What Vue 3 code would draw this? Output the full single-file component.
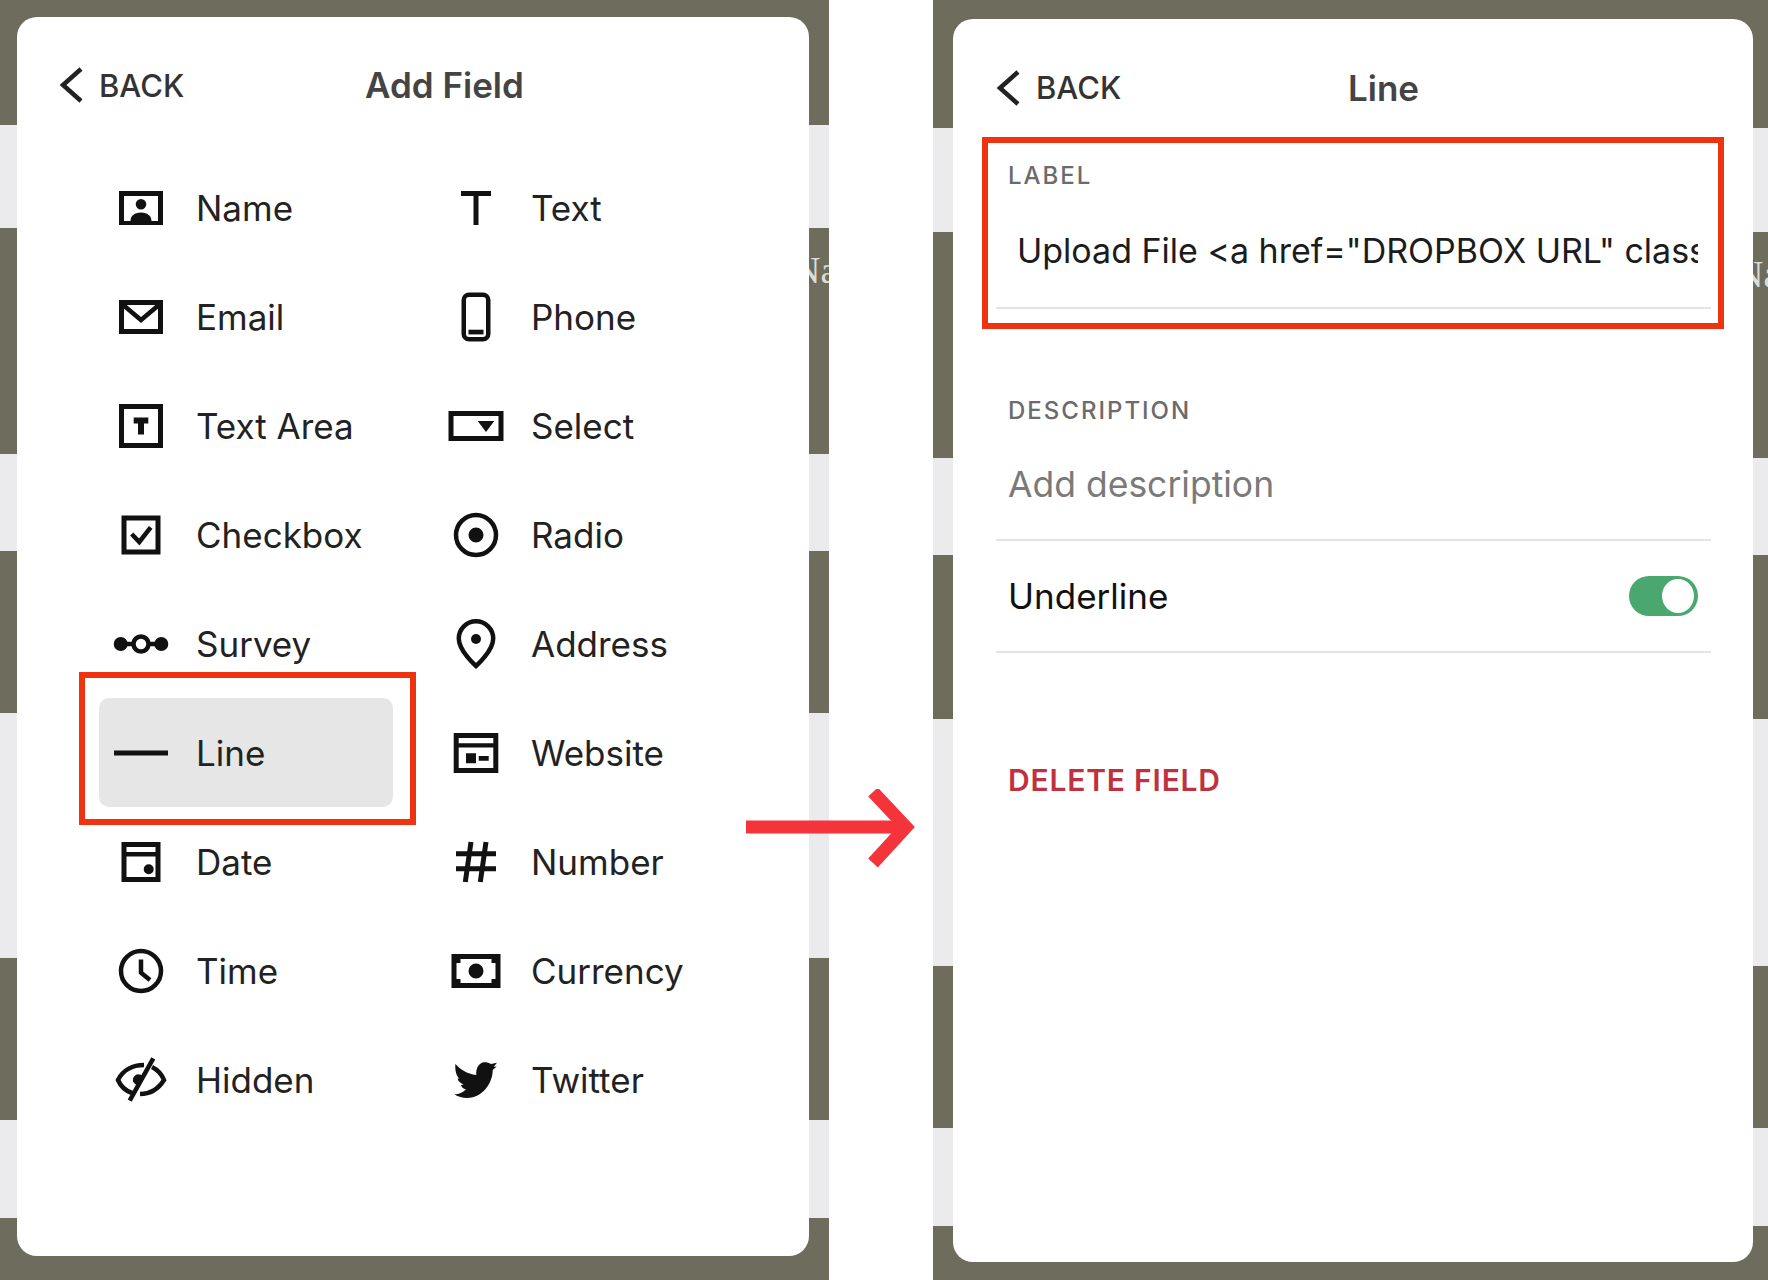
<script setup>
// Backdrop stripes of each phone screenshot, top to bottom
const leftBands = [
  { h: 125, dark: true },
  { h: 103, dark: false },
  { h: 226, dark: true, ghost: 793 },
  { h: 97, dark: false },
  { h: 162, dark: true },
  { h: 245, dark: false },
  { h: 162, dark: true },
  { h: 98, dark: false },
  { h: 62, dark: true }
]
const rightBands = [
  { h: 128, dark: true },
  { h: 104, dark: false },
  { h: 226, dark: true, ghost: 803 },
  { h: 97, dark: false },
  { h: 164, dark: true },
  { h: 247, dark: false },
  { h: 162, dark: true },
  { h: 98, dark: false },
  { h: 54, dark: true }
]

// Field types. Icons sit in a 60x60 box: d = filled (evenodd), s = stroked
const fields = [
  { label: 'Name', d: 'M8 13h44v34H8zM13 18v25h6.5c0-5 4-8.5 10.5-8.5s10.5 3.5 10.5 8.5H47V18zM30 21a5.3 5.3 0 1 1 0 10.6a5.3 5.3 0 0 1 0-10.6z' },
  { label: 'Text', d: 'M15 13h30v5H32.5v29h-5V18H15z' },
  { label: 'Email', d: 'M8 13h44v34H8zM13 18v24h34V18z', s: 'M11 17L30 33L49 17' },
  { label: 'Phone', d: 'M22.5 42.7h15v4.7h-15z', s: 'M23 7.75h14a5.25 5.25 0 0 1 5.25 5.25v34a5.25 5.25 0 0 1-5.25 5.25H23a5.25 5.25 0 0 1-5.25-5.25V13A5.25 5.25 0 0 1 23 7.75z' },
  { label: 'Text Area', d: 'M8 8h44v44H8zM13 13v34h34V13zM22.7 21.5h14.6v6h-4.3v11h-6v-11h-4.3z' },
  { label: 'Select', d: 'M2.5 15h55v30h-55zM7.5 20v20h45V20zM31.7 25h16.6L40 36z' },
  { label: 'Checkbox', d: 'M10.5 10.5h39v39h-39zM15.5 15.5v29h29v-29z', s: 'M20.7 29L28.3 37L39.7 22.3' },
  { label: 'Radio', d: 'M30 22.5a7.5 7.5 0 1 1 0 15a7.5 7.5 0 0 1 0-15z', s: 'M30 10a20 20 0 1 1 0 40a20 20 0 0 1 0-40z' },
  { label: 'Survey', d: 'M9.7 23a7 7 0 1 1 0 14a7 7 0 0 1 0-14zM50.3 23a7 7 0 1 1 0 14a7 7 0 0 1 0-14z', s: 'M30 22.5a7.5 7.5 0 1 1 0 15a7.5 7.5 0 0 1 0-15zM15 30H23M37 30H45' },
  { label: 'Address', d: 'M30 20a5 5 0 1 1 0 10a5 5 0 0 1 0-10z', s: 'M30 52C30 52 12.8 37 12.8 24.5a17.2 17.2 0 0 1 34.4 0C47.2 37 30 52 30 52z' },
  { label: 'Line', active: true, d: 'M3 27.5h54v5H3z' },
  { label: 'Website', d: 'M7.7 10h44.6v40H7.7zM12.7 15v5.3h34.6V15zM12.7 24.5V45h34.6V24.5zM20 30.3h10v10H20zM32.7 33h10v4.7h-10z' },
  { label: 'Date', d: 'M10.5 10h39v40h-39zM15.5 15v5h29v-5zM15.5 24.5V45h29V24.5zM37.7 32.3a5 5 0 1 1 0 10a5 5 0 0 1 0-10z' },
  { label: 'Number', s: 'M10 21.7h40M10 36.7h40M25 10L19.3 50M40 10L34.3 50', w: 5 },
  { label: 'Time', s: 'M30 10a20 20 0 1 1 0 40a20 20 0 0 1 0-40zM30 18.5V31.7L39 39' },
  { label: 'Currency', d: 'M5.5 13h49v34h-49zM14.5 18v4h-4v16h4v4h31v-4h4V22h-4v-4zM30 22.5a7.5 7.5 0 1 1 0 15a7.5 7.5 0 0 1 0-15z' },
  { label: 'Hidden', d: 'M28.5 24.5a5 5 0 0 1 2.5 .7L26 35a5 5 0 0 1 2.5-10.5z', s: 'M42.3 8.3L18.7 50.7M33 15C22 15 12 20 7 30C10 37 15 41 21 43M41 17C47 20 51 25 53 30C48 38 40 44 29 44' },
  { label: 'Twitter', d: 'M9.3 14C14 19 21 24 30.3 25C29.5 19 33 12.3 38.3 12.3C41 12.3 43 12.8 45 14L51 12.7L47.7 16.7L50.7 16.5L46.7 20C47 28 42 39 34 44C27 48.5 17 50 8.3 44.3C11 44.5 16 43.5 20 39.3C17 39 15.5 37 15 35L17.7 34.5C14 33 11.7 31 11.7 28.3L13.7 28.8C10.5 26 9 22 9.3 14z' }
]
</script>

<template>
  <div class="page">
    <!-- Left phone: field picker -->
    <section class="phone phone-left">
      <div
        v-for="(band, i) in leftBands"
        :key="i"
        class="band"
        :class="{ dark: band.dark }"
        :style="{ height: band.h + 'px' }"
      >
        <span v-if="band.ghost" class="ghost" :style="{ marginLeft: band.ghost + 'px' }">Na</span>
      </div>

      <div class="panel panel-left">
        <header class="head head-left">
          <div class="back">
            <svg class="chevron" viewBox="0 0 24 36" width="24" height="36">
              <path d="M22 2L4 18L22 34" fill="none" stroke="#222" stroke-width="4.5" />
            </svg>
            <span>BACK</span>
          </div>
          <h2 class="title">Add Field</h2>
        </header>

        <div class="grid">
          <div v-for="f in fields" :key="f.label" class="item" :class="{ active: f.active }">
            <span class="icon">
              <svg viewBox="0 0 60 60" width="60" height="60">
                <path v-if="f.d" :d="f.d" fill="#111" fill-rule="evenodd" />
                <path v-if="f.s" :d="f.s" fill="none" stroke="#111" :stroke-width="f.w || 4.5" />
              </svg>
            </span>
            <span class="item-label">{{ f.label }}</span>
          </div>
        </div>

        <div class="mark mark-line"></div>
      </div>
    </section>

    <!-- Right phone: field settings -->
    <section class="phone phone-right">
      <div
        v-for="(band, i) in rightBands"
        :key="i"
        class="band"
        :class="{ dark: band.dark }"
        :style="{ height: band.h + 'px' }"
      >
        <span v-if="band.ghost" class="ghost" :style="{ marginLeft: band.ghost + 'px' }">Na</span>
      </div>

      <div class="panel panel-right">
        <header class="head head-right">
          <div class="back">
            <svg class="chevron" viewBox="0 0 24 36" width="24" height="36">
              <path d="M22 2L4 18L22 34" fill="none" stroke="#222" stroke-width="4.5" />
            </svg>
            <span>BACK</span>
          </div>
          <h2 class="title">Line</h2>
        </header>

        <div class="form">
          <div class="field field-label">
            <div class="caption">LABEL</div>
            <div class="value">Upload File &lt;a href="DROPBOX URL" class</div>
          </div>
          <div class="field field-desc">
            <div class="caption">DESCRIPTION</div>
            <div class="placeholder">Add description</div>
          </div>
          <div class="toggle-row">
            <span>Underline</span>
            <span class="toggle"><span class="knob"></span></span>
          </div>
          <div class="delete">DELETE FIELD</div>
        </div>

        <div class="mark mark-label"></div>
      </div>
    </section>

    <svg class="arrow" viewBox="0 0 170 80" width="170" height="80">
      <path d="M0 38H162" stroke="#f5333a" stroke-width="13" fill="none" />
      <path d="M127 3L160 38L127 74" stroke="#f5333a" stroke-width="13" fill="none" />
    </svg>
  </div>
</template>

<style scoped>
.page {
  position: relative;
  display: flex;
  justify-content: space-between;
  width: 1768px;
  height: 1280px;
  background: #fff;
  font-family: Inter, "Liberation Sans", sans-serif;
  overflow: hidden;
}

.phone {
  position: relative;
  height: 1280px;
  overflow: hidden;
  display: flex;
  flex-direction: column;
}

.phone-left {
  width: 829px;
}

.phone-right {
  width: 835px;
}

.band {
  flex: none;
  background: #ebebed;
  white-space: nowrap;
  overflow: hidden;
}

.band.dark {
  background: #6e6c5d;
}

.ghost {
  display: block;
  margin-top: 21px;
  font-family: "Liberation Serif", serif;
  font-size: 38px;
  line-height: 42px;
  color: #dcdcd8;
}

/* White sheet lying on top of the stripes */
.panel {
  position: absolute;
  background: #fff;
  border-radius: 20px;
  display: flex;
  flex-direction: column;
}

.panel-left {
  left: 17px;
  top: 17px;
  width: 792px;
  height: 1239px;
}

.panel-right {
  left: 20px;
  top: 19px;
  width: 800px;
  height: 1243px;
}

.head {
  display: flex;
  align-items: center;
  flex: none;
  box-sizing: border-box;
}

.head-left {
  height: 136px;
  padding-left: 42px;
}

.head-right {
  height: 118px;
  padding-left: 43px;
  padding-top: 19px;
}

.back {
  display: flex;
  align-items: center;
  gap: 16px;
  font-size: 31px;
  font-weight: 500;
  color: #333;
}

.head-left .back {
  width: 306px;
}

.head-right .back {
  width: 352px;
}

.title {
  margin: 0;
  font-size: 35px;
  font-weight: 600;
  color: #444;
}

.grid {
  display: grid;
  grid-template-columns: 335px 335px;
  grid-auto-rows: 109px;
  padding-left: 82px;
}

.item {
  width: 294px;
  display: flex;
  align-items: center;
  gap: 13px;
  border-radius: 10px;
  font-size: 35px;
  color: #222;
}

.item.active {
  background: #e6e6e6;
}

.icon {
  flex: none;
  width: 84px;
  display: flex;
  justify-content: center;
}

.icon svg {
  display: block;
}

/* Red annotation frames */
.mark {
  position: absolute;
  box-sizing: border-box;
  border: 6px solid #ee3311;
}

.mark-line {
  left: 62px;
  top: 655px;
  width: 337px;
  height: 153px;
}

.mark-label {
  left: 29px;
  top: 118px;
  width: 742px;
  height: 192px;
}

.form {
  padding: 0 42px 0 43px;
}

.field {
  border-bottom: 2px solid #e4e4e4;
  padding-left: 12px;
}

.field-label {
  padding-top: 25px;
  padding-bottom: 32px;
}

.field-desc {
  margin-top: 88px;
  padding-bottom: 30px;
}

.caption {
  font-size: 24px;
  line-height: 28px;
  font-weight: 500;
  letter-spacing: 2px;
  color: #6b6b6b;
}

.value,
.placeholder {
  margin-top: 36px;
  height: 48px;
  line-height: 48px;
  white-space: nowrap;
  overflow: hidden;
}

.value {
  margin-top: 37px;
  margin-left: 9px;
  margin-right: 13px;
  font-size: 34px;
  color: #1c1c1c;
}

.placeholder {
  font-size: 35.5px;
  color: #7a7a7a;
}

.toggle-row {
  height: 110px;
  display: flex;
  align-items: center;
  justify-content: space-between;
  padding: 0 13px 0 12px;
  border-bottom: 2px solid #e4e4e4;
  font-size: 35px;
  color: #111;
}

.toggle {
  width: 69px;
  height: 40px;
  border-radius: 20px;
  background: #4aa86f;
  display: flex;
  align-items: center;
  justify-content: flex-end;
  padding-right: 4px;
  box-sizing: border-box;
}

.knob {
  width: 32px;
  height: 34px;
  border-radius: 50%;
  background: #fff;
}

.delete {
  margin-top: 109px;
  padding-left: 12px;
  line-height: 36px;
  font-size: 30px;
  font-weight: 600;
  letter-spacing: 0.8px;
  color: #c0313f;
}

.arrow {
  position: absolute;
  left: 746px;
  top: 789px;
}
</style>
